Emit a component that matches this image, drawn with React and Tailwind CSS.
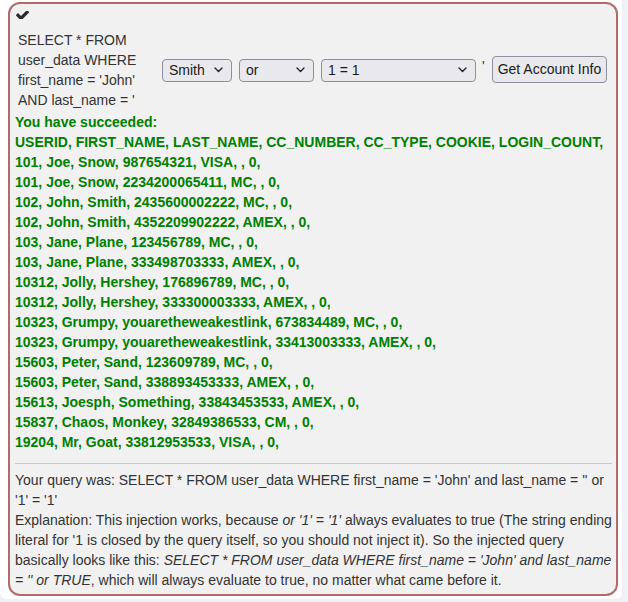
import React from 'react';

const ROWS = [
  '101, Joe, Snow, 987654321, VISA, , 0,',
  '101, Joe, Snow, 2234200065411, MC, , 0,',
  '102, John, Smith, 2435600002222, MC, , 0,',
  '102, John, Smith, 4352209902222, AMEX, , 0,',
  '103, Jane, Plane, 123456789, MC, , 0,',
  '103, Jane, Plane, 333498703333, AMEX, , 0,',
  '10312, Jolly, Hershey, 176896789, MC, , 0,',
  '10312, Jolly, Hershey, 333300003333, AMEX, , 0,',
  '10323, Grumpy, youaretheweakestlink, 673834489, MC, , 0,',
  '10323, Grumpy, youaretheweakestlink, 33413003333, AMEX, , 0,',
  '15603, Peter, Sand, 123609789, MC, , 0,',
  '15603, Peter, Sand, 338893453333, AMEX, , 0,',
  '15613, Joesph, Something, 33843453533, AMEX, , 0,',
  '15837, Chaos, Monkey, 32849386533, CM, , 0,',
  '19204, Mr, Goat, 33812953533, VISA, , 0,'
];

function Chevron() {
  return (
    <svg width="9" height="6" viewBox="0 0 9 6" fill="none" stroke="#222" strokeWidth="1.4" strokeLinecap="round" strokeLinejoin="round">
      <path d="M1 1l3.5 3.5L8 1" />
    </svg>
  );
}

// fake <select> so the look doesn't depend on the browser's widget
function Select({ label, width }) {
  return (
    <div
      className={`flex items-center justify-between h-[23px] pl-[6px] pr-[8px] bg-[#e9e9ed] border border-[#8f8f9d] rounded-[4px] text-[14px] text-[#1a1a1a] ${width}`}
    >
      <span className="leading-none">{label}</span>
      <Chevron />
    </div>
  );
}

export default function App() {
  return (
    <div className="min-h-screen overflow-hidden bg-[#eff1f5] font-['Liberation_Sans',Arial,sans-serif]">
      <div className="w-[622px] h-[599px] bg-white rounded-b-[6px] pl-[8px] pt-[2px]">
        <div className="w-[610px] h-[594px] border-2 border-[#b26a6a] rounded-[12px] bg-[#f1f1f1] pl-[5px] pr-[4px]">
          {/* status check */}
          <div className="h-[26px] pt-[7px] pl-[1px]">
            <svg width="13" height="8" viewBox="121 430 1550 928" fill="#2b2b2b">
              <path d="M1671 566q0 40-28 68l-724 724-136 136q-28 28-68 28t-68-28l-136-136-362-362q-28-28-28-68t28-68l136-136q28-28 68-28t68 28l294 295 656-657q28-28 68-28t68 28l136 136q28 28 28 68z" />
            </svg>
          </div>

          {/* query form */}
          <div className="flex items-center">
            <div className="w-[147px] pl-[3px] text-[14px] leading-[20px] text-[#333]">
              SELECT * FROM user_data WHERE first_name = 'John' AND last_name = '
            </div>
            <div className="flex items-center gap-[7px]">
              <Select label="Smith" width="w-[70px]" />
              <Select label="or" width="w-[75px]" />
              <Select label="1 = 1" width="w-[155px]" />
            </div>
            <span className="ml-[6px] mr-[7px] text-[14px] text-[#333] -mt-[8px]">'</span>
            <button className="h-[27px] px-[5px] bg-[#e9e9ed] border border-[#8f8f9d] rounded-[4px] text-[14px] text-[#1a1a1a] -mt-[1px]">
              Get Account Info
            </button>
          </div>

          {/* results */}
          <div className="mt-[2px] text-[14px] leading-[20px] font-bold text-[#008000]">
            <p>You have succeeded:</p>
            <p>USERID, FIRST_NAME, LAST_NAME, CC_NUMBER, CC_TYPE, COOKIE, LOGIN_COUNT,</p>
            {ROWS.map(r => (
              <p key={r}>{r}</p>
            ))}
          </div>

          <hr className="mt-[11px] mb-[6px] border-t border-[#c9c9c9]" />

          {/* feedback */}
          <div className="whitespace-nowrap text-[14px] leading-[20px] text-[#333]">
            <p>Your query was: SELECT * FROM user_data WHERE first_name = 'John' and last_name = '' or</p>
            <p>'1' = '1'</p>
            <p>Explanation: This injection works, because <i>or '1' = '1'</i> always evaluates to true (The string ending</p>
            <p>literal for '1 is closed by the query itself, so you should not inject it). So the injected query</p>
            <p>basically looks like this: <i>SELECT * FROM user_data WHERE first_name = 'John' and last_name</i></p>
            <p><i>= '' or TRUE</i>, which will always evaluate to true, no matter what came before it.</p>
          </div>
        </div>
      </div>
    </div>
  );
}
